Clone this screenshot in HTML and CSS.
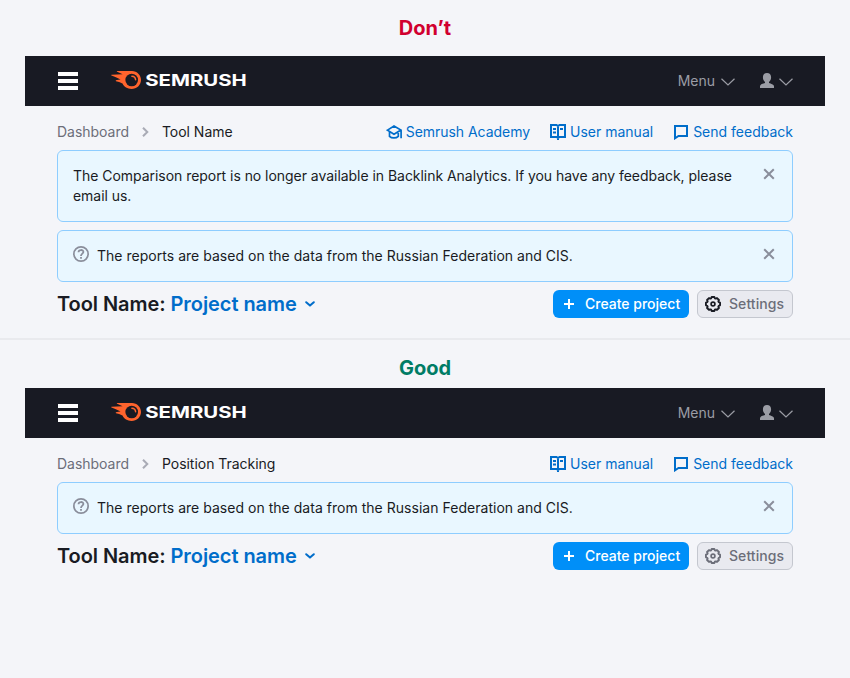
FILE: index.html
```html
<!DOCTYPE html>
<html lang="en">
<head>
<meta charset="utf-8">
<title>Page header</title>
<link rel="stylesheet" href="styles.css">
</head>
<body>
<svg class="defs" width="0" height="0">
  <symbol id="flame" viewBox="0 0 30 18"><path fill="#ff642d" d="M21 0H6.200C5.600 0 5.700.6 6.200.8 8 1.600 10 2.400 11.600 3.300 8 3.400 4 3.400.5 3.700 0 3.800 0 4.300.5 4.500 4 5.700 7 7 9.500 8.600 8 8.800 6.500 9 5 9.300 4.600 9.500 4.700 10 5 10.200 8 10.900 10 11.700 11.500 12.600 13 16 16.500 18 20.500 18 25.700 18 30 14 30 9S26 0 21 0Z"/><circle cx="20.700" cy="9" r="6.300" fill="#181a23"/><path fill="none" stroke="#ff642d" stroke-width="1.500" stroke-linecap="round" d="M20.900 5.200A3.800 3.800 0 0 1 24.600 8.800"/></symbol>
  <symbol id="down" viewBox="0 0 14 8"><path fill="none" stroke="currentColor" stroke-width="1.200" d="M.5.7 7 7 13.500.7"/></symbol>
  <symbol id="user" viewBox="0 0 14 15"><path fill="currentColor" d="M7 0C4.500 0 2.900 1.600 2.900 4.200c0 2 .8 3.800 2.100 4.700v1C3 10.700 0 11.300 0 13.200V15h14v-1.800c0-1.900-3-2.500-5-3.300v-1c1.300-.9 2.100-2.700 2.100-4.700C11.100 1.600 9.500 0 7 0Z"/></symbol>
  <symbol id="crumb" viewBox="0 0 7 10"><path fill="none" stroke="currentColor" stroke-width="2" d="M1 .7 5.300 5 1 9.300"/></symbol>
  <symbol id="academy" viewBox="0 0 16 14"><path fill="none" stroke="currentColor" stroke-width="1.700" d="M1.500 5.100 8 1.100 14.900 5.100 8 9.200ZM3.500 6.500V11.300c2.200 2.200 6.600 2.200 8.800 0V6.500M15.100 5v8.300"/></symbol>
  <symbol id="book" viewBox="0 0 16 16"><path fill="none" stroke="currentColor" stroke-width="2" d="M1 1h5.500L8 2 9.500 1H15v12H9.500L8 14 6.500 13H1ZM8 2v14M3 5h3M3 8.500h3M10 5h3"/></symbol>
  <symbol id="chat" viewBox="0 0 14 15"><path fill="none" stroke="currentColor" stroke-width="2" d="M1 1h12v10H4.500L1 13.300Z"/></symbol>
  <symbol id="help" viewBox="0 0 16 16"><circle cx="8" cy="8" r="7.150" fill="none" stroke="currentColor" stroke-width="1.700"/><path fill="none" stroke="currentColor" stroke-width="1.800" d="M5.500 6.300C5.600 3.300 10.400 3.300 10.400 6.100 10.400 7.600 8 7.800 8 9.900M8 11v1.800"/></symbol>
  <symbol id="close" viewBox="0 0 12 12"><path fill="none" stroke="currentColor" stroke-width="2" d="M1.200 1.200 10.800 10.800M10.800 1.200 1.200 10.800"/></symbol>
  <symbol id="small-down" viewBox="0 0 10 6"><path fill="none" stroke="currentColor" stroke-width="2" stroke-linecap="round" stroke-linejoin="round" d="M1.200 1.200 5 4.600 8.800 1.200"/></symbol>
  <symbol id="plus" viewBox="0 0 10 10"><path stroke="currentColor" stroke-width="2" d="M5 0v10M0 5h10"/></symbol>
  <symbol id="gear" viewBox="-8 -8 16 16"><path fill="none" stroke="currentColor" stroke-width="1.900" stroke-linejoin="round" d="M7.050-1.370V1.370L5.740 1.800 5.340 2.780 5.950 4.010 4.010 5.950 2.780 5.340 1.800 5.740 1.370 7.050H-1.370L-1.800 5.740-2.780 5.340-4.010 5.950-5.950 4.010-5.340 2.780-5.740 1.800-7.050 1.370V-1.370L-5.740-1.800-5.340-2.780-5.950-4.010-4.010-5.950-2.780-5.340-1.800-5.740-1.370-7.050H1.370L1.800-5.740 2.780-5.340 4.010-5.950 5.950-4.010 5.340-2.780 5.740-1.800Z"/><circle r="1.900" fill="none" stroke="currentColor" stroke-width="1.700"/></symbol>
</svg>

<section class="example">
  <h2 class="verdict bad">Don’t</h2>
  <header class="topbar">
    <div class="burger"><i></i><i></i><i></i></div>
    <div class="logo"><svg width="30" height="18"><use href="#flame"/></svg><svg class="word" width="101" height="18"><text x="-.8" y="14.500" textLength="101.500" lengthAdjust="spacingAndGlyphs">SEMRUSH</text></svg></div>
    <div class="menu"><span>Menu</span><svg width="14" height="8"><use href="#down"/></svg></div>
    <div class="account"><svg width="14" height="15"><use href="#user"/></svg><svg class="arrow" width="14" height="8"><use href="#down"/></svg></div>
  </header>
  <div class="content">
    <div class="row">
      <nav class="crumbs"><span class="parent">Dashboard</span><svg width="7" height="10"><use href="#crumb"/></svg><span>Tool Name</span></nav>
      <div class="links">
        <a class="academy"><svg width="16" height="14"><use href="#academy"/></svg>Semrush Academy</a>
        <a><svg width="16" height="16"><use href="#book"/></svg>User manual</a>
        <a class="feedback"><svg width="14" height="15"><use href="#chat"/></svg>Send feedback</a>
      </div>
    </div>
    <div class="notice"><p class="long">The Comparison report is no longer available in Backlink Analytics. If you have any feedback, please email us.</p><svg class="close" width="12" height="12"><use href="#close"/></svg></div>
    <div class="notice"><svg class="help" width="16" height="16"><use href="#help"/></svg><p>The reports are based on the data from the Russian Federation and CIS.</p><svg class="close" width="12" height="12"><use href="#close"/></svg></div>
    <div class="title-row">
      <h1>Tool Name: <a>Project name</a></h1><svg class="pick" width="10" height="6"><use href="#small-down"/></svg>
      <button class="btn primary"><svg width="10" height="10"><use href="#plus"/></svg>Create project</button>
      <button class="btn settings dark-icon"><svg width="16" height="16"><use href="#gear"/></svg>Settings</button>
    </div>
  </div>
</section>

<section class="example second">
  <h2 class="verdict good">Good</h2>
  <header class="topbar">
    <div class="burger"><i></i><i></i><i></i></div>
    <div class="logo"><svg width="30" height="18"><use href="#flame"/></svg><svg class="word" width="101" height="18"><text x="-.8" y="14.500" textLength="101.500" lengthAdjust="spacingAndGlyphs">SEMRUSH</text></svg></div>
    <div class="menu"><span>Menu</span><svg width="14" height="8"><use href="#down"/></svg></div>
    <div class="account"><svg width="14" height="15"><use href="#user"/></svg><svg class="arrow" width="14" height="8"><use href="#down"/></svg></div>
  </header>
  <div class="content">
    <div class="row">
      <nav class="crumbs"><span class="parent">Dashboard</span><svg width="7" height="10"><use href="#crumb"/></svg><span>Position Tracking</span></nav>
      <div class="links">
        <a><svg width="16" height="16"><use href="#book"/></svg>User manual</a>
        <a class="feedback"><svg width="14" height="15"><use href="#chat"/></svg>Send feedback</a>
      </div>
    </div>
    <div class="notice"><svg class="help" width="16" height="16"><use href="#help"/></svg><p>The reports are based on the data from the Russian Federation and CIS.</p><svg class="close" width="12" height="12"><use href="#close"/></svg></div>
    <div class="title-row">
      <h1>Tool Name: <a>Project name</a></h1><svg class="pick" width="10" height="6"><use href="#small-down"/></svg>
      <button class="btn primary"><svg width="10" height="10"><use href="#plus"/></svg>Create project</button>
      <button class="btn settings"><svg width="16" height="16"><use href="#gear"/></svg>Settings</button>
    </div>
  </div>
</section>
</body>
</html>
```
FILE: styles.css
```css
* { box-sizing: border-box; }
body {
  margin: 0;
  height: 678px;
  background: #f4f5f9;
  color: #191b23;
  font: 14px/20px Inter, sans-serif;
  overflow: hidden;
}
svg { display: block; flex: none; }
.defs { position: absolute; }
h1, h2, p { margin: 0; }

.example { height: 338px; padding: 0 25px; }
.second { height: 340px; border-top: 2px solid #e9eaee; }
.verdict {
  height: 56px;
  font-size: 20px;
  font-weight: 700;
  line-height: 56px;
  text-align: center;
}
.second .verdict { height: 48px; line-height: 56px; }
.bad { color: #d1002f; }
.good { color: #007c65; }

.topbar {
  display: flex;
  align-items: center;
  height: 50px;
  padding: 0 32px 0 33px;
  background: #181a23;
  color: #9b9da5;
}
.burger { display: grid; gap: 3px; width: 20px; }
.burger i { height: 4px; background: #fff; }
.logo { display: flex; gap: 5px; margin: -2px 0 0 33px; }
.word { overflow: visible; }
.word text { fill: #fff; font: 700 16px Inter, sans-serif; }
.menu { display: flex; align-items: center; gap: 6px; margin-left: auto; }
.menu svg { margin-top: 2px; }
.account { display: flex; align-items: center; gap: 5px; margin-left: 25px; }
.account svg:first-child { margin-top: -1px; }
.arrow { margin-top: 2px; }

.content { padding: 0 32px; }
.row {
  display: flex;
  justify-content: space-between;
  align-items: center;
  height: 44px;
  padding-top: 8px;
}
.crumbs { display: flex; align-items: center; gap: 13px; letter-spacing: -0.03px; }
.parent { color: #6c6e79; }
.crumbs svg { color: #a9abb6; }
.links { display: flex; gap: 21px; }
.links a { display: flex; align-items: center; gap: 4px; color: #006dca; }
.links .feedback { gap: 5px; }
.links .academy { margin-right: -1px; letter-spacing: -0.04px; }

.notice {
  display: flex;
  align-items: flex-start;
  margin-bottom: 8px;
  padding: 15px;
  border: 1px solid #8ecdff;
  border-radius: 6px;
  background: #e9f7ff;
}
.notice p { flex: 1; padding-right: 16px; letter-spacing: 0.025px; }
.notice .long { letter-spacing: -0.04px; }
.help { margin: 0 8px 0 0; color: #8a8e9b; }
.close { margin: 2px 2px 0 0; color: #8a8e9b; }

.title-row { display: flex; align-items: center; height: 28px; }
h1 { font-size: 20px; font-weight: 600; line-height: 28px; letter-spacing: -0.06px; }
h1 a { color: #006dca; }
.pick { margin: 0 auto 0 8px; color: #006dca; }
.btn {
  display: flex;
  align-items: center;
  height: 28px;
  border: 0;
  border-radius: 6px;
  font: 500 14px/20px Inter, sans-serif;
  white-space: nowrap;
}
.primary { width: 136px; gap: 11px; padding: 0 0 0 11px; background: #008ff8; color: #fff; }
.settings {
  width: 96px;
  margin-left: 8px;
  gap: 8px;
  padding: 0 0 0 7px;
  border: 1px solid #c4c7cf;
  background: #e9eaf0;
  color: #6c6e79;
  letter-spacing: 0.06px;
}
.dark-icon svg { color: #191b23; }
```
